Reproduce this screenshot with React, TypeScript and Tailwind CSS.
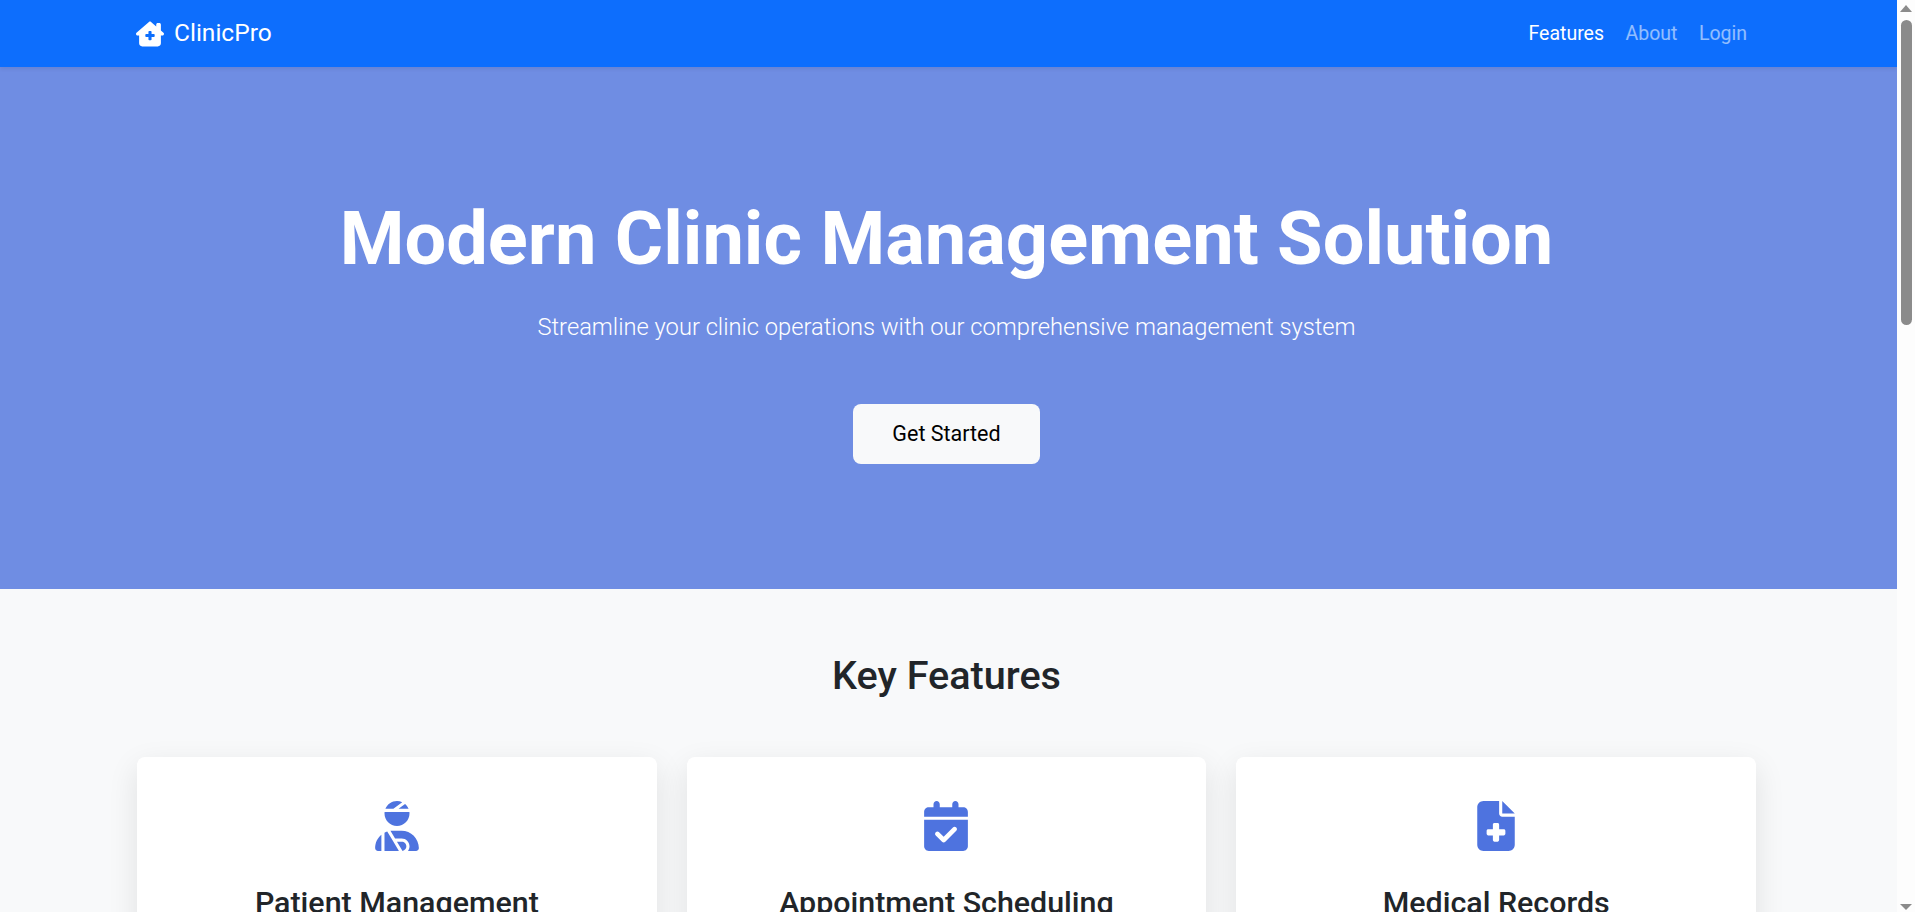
import { FaCalendarCheck, FaFileMedical, FaHouseChimneyMedical, FaUserInjured } from 'react-icons/fa6';
import type { IconType } from 'react-icons';

const features: { title: string; icon: IconType }[] = [
  { title: 'Patient Management', icon: FaUserInjured },
  { title: 'Appointment Scheduling', icon: FaCalendarCheck },
  { title: 'Medical Records', icon: FaFileMedical },
];

// Classic Windows scrollbar, the page itself is clipped to the window
const Scrollbar = () => (
  <aside className="flex w-[18px] shrink-0 flex-col items-center bg-[#fdfdfd]">
    <div className="mt-[5px] h-0 w-0 border-x-[6px] border-b-[7px] border-x-transparent border-b-[#8b8b8b]" />
    <div className="mt-[8px] h-[305px] w-[11px] rounded-full bg-[#8b8b8b]" />
    <div className="mt-auto mb-[2px] h-0 w-0 border-x-[6px] border-t-[6px] border-x-transparent border-t-[#8b8b8b]" />
  </aside>
);

export default function App() {
  return (
    <div className="flex h-[912px] overflow-hidden font-['Roboto',sans-serif] text-[#212529]">
      <main className="min-w-0 flex-1 overflow-hidden bg-[#f8f9fa]">
        <nav className="relative z-10 flex h-[67px] items-center justify-between bg-[#0d6efd] pl-[136px] pr-[150px] shadow-[0_2px_4px_rgba(0,0,0,0.075)]">
          <a className="flex items-center gap-[10px] text-[24.5px] text-white">
            <FaHouseChimneyMedical className="text-[28px]" />
            ClinicPro
          </a>
          <div className="flex items-center gap-[21.5px] pt-px text-[19.5px]">
            <a className="text-white">Features</a>
            <a className="text-white/55">About</a>
            <a className="text-white/55">Login</a>
          </div>
        </nav>

        <section className="flex h-[522px] flex-col items-center bg-[#6f8de3] pl-[137px] pr-[141px] pt-[128px] text-white">
          <h1 className="text-[74px] leading-[1.2] font-bold">Modern Clinic Management Solution</h1>
          <p className="mt-[26px] text-[23.7px] font-light">Streamline your clinic operations with our comprehensive management system</p>
          <button className="mt-[59px] h-[60px] w-[187px] rounded-lg bg-[#f8f9fa] text-[21.5px] text-black">Get Started</button>
        </section>

        <section className="pl-[137px] pr-[141px] pt-[63px]">
          <h2 className="text-center text-[39.6px] leading-[1.2] font-medium">Key Features</h2>
          <div className="mt-[57px] grid grid-cols-3 gap-[30px]">
            {features.map(({ title, icon: Icon }) => (
              <div key={title} className="flex h-[400px] flex-col items-center rounded-lg bg-white pt-[44px] shadow-[0_10px_30px_rgba(0,0,0,0.1)]">
                <Icon className="text-[50px] text-[#4e73df]" />
                <h3 className="mt-[29px] text-[30.4px] font-medium">{title}</h3>
              </div>
            ))}
          </div>
        </section>
      </main>
      <Scrollbar />
    </div>
  );
}
